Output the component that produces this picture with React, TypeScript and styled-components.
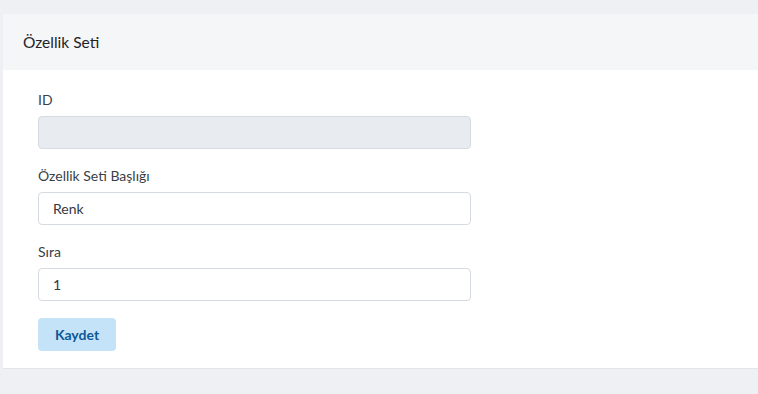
import styled, { createGlobalStyle } from "styled-components"

const GlobalStyle = createGlobalStyle`
  html, body {
    margin: 0;
    padding: 0;
    background: #eff0f4;
    font-family: Lato, "Open Sans", sans-serif;
    color: #2f343b;
  }
`

const Page = styled.div`
  padding: 14px 0 26px 3px;
  overflow: hidden;
`

const Card = styled.section`
  width: 800px;
  background: #ffffff;
  border-bottom: 1px solid #e3e5ea;
`

const CardHeader = styled.header`
  height: 56px;
  display: flex;
  align-items: center;
  padding-left: 20px;
  background: #f5f6f8;
  font-size: 15.5px;
  color: #1f2328;
`

const CardBody = styled.form`
  padding: 20px 35px 17px;
  display: flex;
  flex-direction: column;
  align-items: flex-start;
`

const Field = styled.div`
  display: flex;
  flex-direction: column;
  margin-bottom: 17px;
`

const Label = styled.label`
  font-size: 14px;
  line-height: 20px;
  color: #3a3f47;
  margin-bottom: 6px;
`

const Input = styled.input`
  box-sizing: border-box;
  width: 433px;
  height: 33px;
  padding: 0 14px;
  border: 1px solid #d6dae1;
  border-radius: 4px;
  font-family: inherit;
  font-size: 14px;
  color: #33383f;
  background: #ffffff;
  outline: none;

  &:disabled {
    background: #e8ebef;
  }
`

const Button = styled.button`
  box-sizing: border-box;
  width: 78px;
  height: 33px;
  border: none;
  border-radius: 4px;
  background: #c5e3f8;
  color: #0e5897;
  font-family: inherit;
  font-size: 14px;
  font-weight: 700;
  cursor: pointer;
`

export default function App() {
  return (
    <>
      <GlobalStyle />
      <Page>
        <Card>
          <CardHeader>Özellik Seti</CardHeader>
          <CardBody onSubmit={(e) => e.preventDefault()}>
            <Field>
              <Label>ID</Label>
              <Input disabled defaultValue="" />
            </Field>
            <Field>
              <Label>Özellik Seti Başlığı</Label>
              <Input defaultValue="Renk" />
            </Field>
            <Field>
              <Label>Sıra</Label>
              <Input defaultValue="1" />
            </Field>
            <Button type="submit">Kaydet</Button>
          </CardBody>
        </Card>
      </Page>
    </>
  )
}
